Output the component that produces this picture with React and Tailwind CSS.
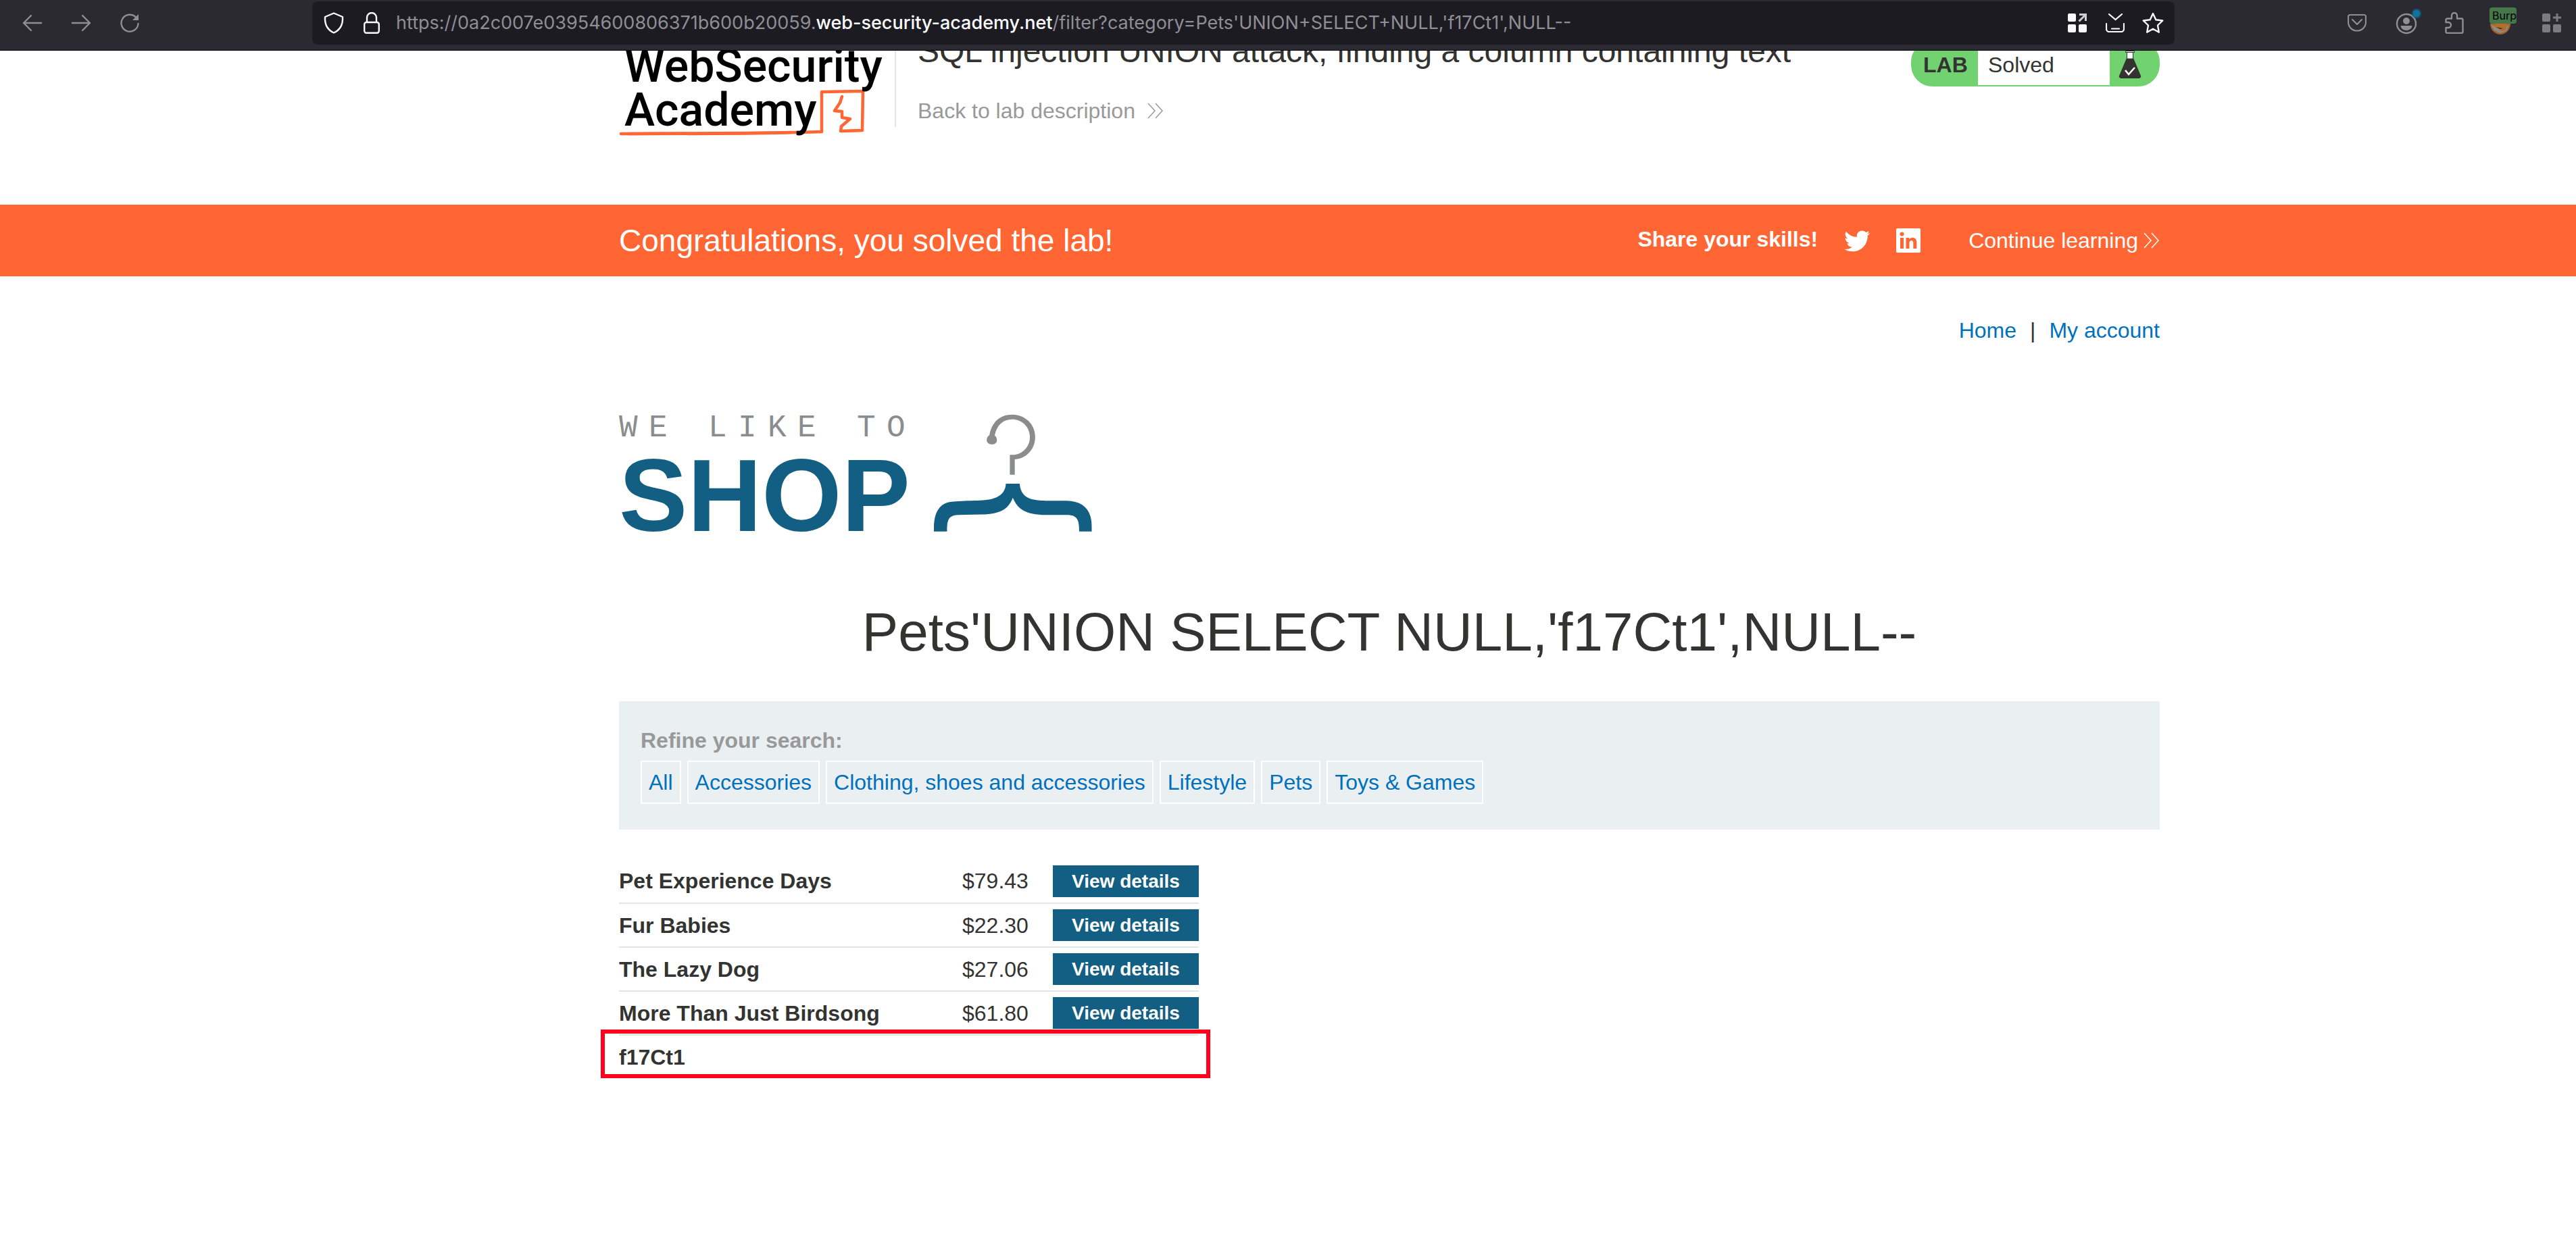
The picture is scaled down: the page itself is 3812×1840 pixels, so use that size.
import React from "react";

const COLS = "grid grid-cols-[916fr_2280fr_616fr]";

const CHROME_BTN = "flex h-10 w-10 items-center justify-center";

function Chevrons({ className }) {
  return (
    <svg className={className} viewBox="0 0 24 24" fill="none" stroke="currentColor" strokeWidth="1.5" aria-hidden="true">
      <path d="M1 1l10 11L1 23M12 1l10 11-10 11" />
    </svg>
  );
}

function Arrow({ flip }) {
  return (
    <svg className="h-8 w-8" viewBox="0 0 32 32" fill="none" stroke="#8f8e97" strokeWidth="2.4" strokeLinecap="round" strokeLinejoin="round" aria-hidden="true">
      {flip ? <path d="M3 16h26M18 5l11 11-11 11" /> : <path d="M29 16H3M14 5L3 16l11 11" />}
    </svg>
  );
}

function Toolbar() {
  return (
    <header className="flex h-[75px] items-start border-b border-black bg-[#2b2a33] pt-0.5 font-['Inter',sans-serif] text-[#8f8e97]">
      <div className="flex h-16 w-[462px] shrink-0 items-center gap-8 pl-7">
        <button className={CHROME_BTN} aria-label="Back"><Arrow /></button>
        <button className={CHROME_BTN} aria-label="Forward"><Arrow flip /></button>
        <button className={CHROME_BTN} aria-label="Reload">
          <svg className="h-8 w-8" viewBox="0 0 32 32" fill="none" stroke="currentColor" strokeWidth="2.4" strokeLinecap="round" aria-hidden="true">
            <path d="M28.500 17A12.500 12.500 0 1 1 25 7.500L28 10" />
            <path d="M29 3v9h-9z" fill="currentColor" stroke="none" />
          </svg>
        </button>
      </div>
      <div className="flex h-16 min-w-0 flex-1 items-center rounded-lg bg-[#1c1b22] pl-4 pr-3">
        <svg className="mr-7 h-8 w-8 shrink-0" viewBox="0 0 32 32" fill="none" stroke="#fbfbfe" strokeWidth="2.4" strokeLinejoin="round" aria-hidden="true">
          <path d="M16 1.500L29 7c.6 10-3 19-13 23.500C6 26 2.400 17 3 7z" />
        </svg>
        <svg className="mr-6 h-8 w-6 shrink-0" viewBox="0 0 24 32" fill="none" stroke="#fbfbfe" strokeWidth="2.400" aria-hidden="true">
          <rect x="1.200" y="15" width="21.600" height="15.800" rx="3" />
          <path d="M5 15V8a7 7 0 0 1 14 0v7" />
        </svg>
        <p className="flex-1 whitespace-nowrap text-[27px] leading-8">
          https://0a2c007e03954600806371b600b20059.<span className="font-medium text-[#fbfbfe]">web-security-academy.net</span>/filter?category=Pets'UNION+SELECT+NULL,'f17Ct1',NULL--
        </p>
        <div className="flex items-center gap-4 text-[#fbfbfe]">
          <button className={CHROME_BTN} aria-label="Show extensions grid">
            <svg className="h-7 w-7" viewBox="0 0 28 28" aria-hidden="true">
              <g fill="currentColor">
                <rect width="12" height="12" rx="2" />
                <rect y="16" width="12" height="12" rx="2" />
                <rect x="16" y="16" width="12" height="12" rx="2" />
              </g>
              <path d="M17 1.500h9.500V11M26 2L16.500 11.500" fill="none" stroke="#cfcfd3" strokeWidth="3" />
            </svg>
          </button>
          <button className={CHROME_BTN} aria-label="Downloads">
            <svg className="h-7 w-7" viewBox="0 0 28 28" fill="none" stroke="currentColor" strokeWidth="2.200" strokeLinecap="round" aria-hidden="true">
              <path d="M5 1l9.500 8L24 1M1 15v8a4 4 0 0 0 4 4h18a4 4 0 0 0 4-4v-8M9 22.500h11" />
            </svg>
          </button>
          <button className={CHROME_BTN} aria-label="Bookmark this page">
            <svg className="h-8 w-8" viewBox="0 0 32 32" fill="none" stroke="currentColor" strokeWidth="2.400" strokeLinejoin="round" aria-hidden="true">
              <path d="M16 2l4.300 9.200 10 1.300-7.300 7 1.800 10.200L16 24.800l-8.800 4.900L9 19.500l-7.300-7 10-1.300z" />
            </svg>
          </button>
        </div>
      </div>
      <div className="flex h-16 w-[594px] shrink-0 items-center justify-end gap-8 pr-4">
        <button className={CHROME_BTN} aria-label="Save to Pocket">
          <svg className="h-7 w-7" viewBox="0 0 28 28" fill="none" stroke="currentColor" strokeWidth="2.200" strokeLinecap="round" strokeLinejoin="round" aria-hidden="true">
            <path d="M3.500 2h21A2.500 2.500 0 0 1 27 4.500V13a13 12.500 0 0 1-26 0V4.500A2.500 2.500 0 0 1 3.500 2z" />
            <path d="M7 9l7 7 7-7" />
          </svg>
        </button>
        <button className={CHROME_BTN} aria-label="Account">
          <svg className="h-10 w-10 overflow-visible" viewBox="0 0 40 40" aria-hidden="true">
            <circle cx="21" cy="21" r="14" fill="none" stroke="currentColor" strokeWidth="2.400" />
            <circle cx="21" cy="17" r="5" fill="currentColor" />
            <path d="M12.500 24h17a8.500 7 0 0 1-17 0z" fill="currentColor" />
            <circle cx="36" cy="6" r="7.500" fill="#10739e" opacity="0.35" />
            <circle cx="36" cy="6" r="5.500" fill="#10739e" />
          </svg>
        </button>
        <button className={CHROME_BTN} aria-label="Extensions">
          <svg className="h-8 w-7" viewBox="0 0 28 32" fill="none" stroke="currentColor" strokeWidth="2.400" strokeLinejoin="round" aria-hidden="true">
            <path d="M10 9.500V5a4 4 0 0 1 8 0v4.500h6.500a2 2 0 0 1 2 2V29a2 2 0 0 1-2 2h-21a2 2 0 0 1-2-2v-6H5a4 4 0 0 0 0-8H1.500v-3.500a2 2 0 0 1 2-2z" />
          </svg>
        </button>
        <button className="flex h-12 w-10 flex-col items-start pt-px" aria-label="Burp proxy">
          <span className="flex h-6 w-10 items-center overflow-hidden rounded-sm bg-[#44774a] pl-1 text-base leading-6 text-black">Burp</span>
          <svg className="h-4 w-8" viewBox="0 0 32 16" aria-hidden="true">
            <path d="M1 0h30a15 16 0 0 1-30 0z" fill="#a7642a" />
            <path d="M2 1l6 3 9 6 12-9-4 10-9 3-9-4z" fill="#8b8b8b" />
            <path d="M8 0h18l-2 10-6 1-10-6z" fill="#b56d28" />
            <path d="M10 5l5 1 5 1-4 1z" fill="#2b2a33" />
          </svg>
        </button>
        <button className={CHROME_BTN} aria-label="Add widget">
          <svg className="h-7 w-7" viewBox="0 0 28 28" fill="#7c7b83" aria-hidden="true">
            <rect width="12" height="12" rx="2" />
            <rect y="16" width="12" height="12" rx="2" />
            <rect x="16" y="16" width="12" height="12" rx="2" />
            <path d="M20.500 0h3v4.500H28v3h-4.500V12h-3V7.500H16v-3h4.500z" />
          </svg>
        </button>
      </div>
    </header>
  );
}

function AcademyLogo() {
  return (
    <a href="#academy" className="relative block h-[188px] w-[408px] shrink-0 text-black">
      <svg className="absolute bottom-0 left-0 h-20 w-[370px]" viewBox="0 0 370 80" fill="none" stroke="#ff6633" strokeWidth="4.500" strokeLinejoin="round" strokeLinecap="round" aria-hidden="true">
        <path d="M3 74c100-1 200 0 297-3L300 12l61-1-1 58-32 1 1-7 13-11-12-2v-9l-11-1 8-12 3-9" />
        <path d="M14 74c90 0 190 0 240-2" />
      </svg>
      <span className="relative block pl-2 pt-[50px] font-['Roboto',sans-serif] text-[68px] font-medium leading-[65px]">
        WebSecurity<br />Academy
      </span>
    </a>
  );
}

function LabHeader() {
  return (
    <section className={`${COLS} h-[228px] overflow-hidden`}>
      <div className="col-start-2 -mt-[59px] flex items-start">
        <AcademyLogo />
        <div className="h-[172px] w-0.5 bg-[#e4e4e4]" />
        <div className="flex-1 pl-8 pt-[30px]">
          <h2 className="text-[48px] leading-[60px]">SQL injection UNION attack, finding a column containing text</h2>
          <a href="#lab" className="mt-[38px] flex items-center gap-[18px] text-[32px] leading-10 text-[#999999]">
            Back to lab description
            <Chevrons className="h-6 w-6" />
          </a>
        </div>
        <div className="mt-11 flex h-[68px] w-[368px] overflow-hidden rounded-[32px] border-2 border-[#72d26f] bg-[#72d26f] text-[32px] leading-[68px]">
          <span className="w-[97px] pl-4 font-bold">LAB</span>
          <span className="flex-1 bg-white pl-[15px]">Solved</span>
          <span className="flex w-[72px] items-center pl-3">
            <svg className="h-11 w-9" viewBox="0 0 36 44" aria-hidden="true">
              <path d="M13 14h10l11 26a3 3 0 0 1-3 4H5a3 3 0 0 1-3-4z" fill="#333332" />
              <path d="M13.500 5h9v10h-9z" fill="#fff" stroke="#333332" />
              <path d="M11.500 3.500h13v2h-13z" fill="#fff" stroke="#333332" />
              <path d="M11 32l5 6 9-10" fill="none" stroke="#fff" strokeWidth="2.500" />
            </svg>
          </span>
        </div>
      </div>
    </section>
  );
}

function Banner() {
  return (
    <section className={`${COLS} bg-[#ff6633] text-white`}>
      <div className="col-start-2 flex h-[106px] items-center">
        <h4 className="flex-1 text-[46px] leading-[60px]">Congratulations, you solved the lab!</h4>
        <span className="pb-1 text-[32px] font-bold leading-10">Share your skills!</span>
        <a href="#twitter" aria-label="Twitter" className="ml-9">
          <svg className="h-11 w-11" viewBox="0 0 24 24" fill="currentColor" aria-hidden="true">
            <path d="M22.460 6c-.770.350-1.600.580-2.460.690a4.300 4.300 0 0 0 1.880-2.380 8.600 8.600 0 0 1-2.720 1.040 4.280 4.280 0 0 0-7.320 2.920c0 .340.040.670.110.980A12.160 12.160 0 0 1 3.160 4.780a4.250 4.250 0 0 0 1.320 5.710 4.200 4.200 0 0 1-1.930-.530v.050a4.280 4.280 0 0 0 3.430 4.190 4.300 4.300 0 0 1-1.930.070 4.280 4.280 0 0 0 4 2.980A8.600 8.600 0 0 1 1.760 19a12.130 12.130 0 0 0 6.580 1.920c7.880 0 12.200-6.540 12.200-12.200l-.010-.560A8.700 8.700 0 0 0 22.460 6z" />
          </svg>
        </a>
        <a href="#linkedin" aria-label="LinkedIn" className="ml-9 mr-[71px]">
          <svg className="h-9 w-9" viewBox="0 0 36 36" aria-hidden="true">
            <rect width="36" height="36" rx="2" fill="#fff" />
            <g fill="#ff6633">
              <circle cx="8.500" cy="8.500" r="3" />
              <path d="M6 14h5v16H6zM14.500 14h4.800v2.300c2.500-4.300 11-3.500 11 4V30h-5v-8.500c0-5-5.800-4.500-5.800 0V30h-5z" />
            </g>
          </svg>
        </a>
        <a href="#learn" className="flex items-center gap-2 text-[32px] leading-10">
          Continue learning
          <Chevrons className="h-6 w-6" />
        </a>
      </div>
    </section>
  );
}

function ShopLogo() {
  return (
    <div className="mt-[102px] flex h-[185px] items-start">
      <div className="w-[466px]">
        <p className="whitespace-pre font-['Liberation_Mono',monospace] text-[46px] leading-[46px] text-[#8b8c8e]">
          {"WE LIKE TO".split("").map((letter, i) => (
            <span key={i} className="inline-block w-11">{letter}</span>
          ))}
        </p>
        <p className="text-[152px] font-bold leading-[152px] text-[#125f83]">SHOP</p>
      </div>
      <svg className="mt-0.5 h-[174px] w-[234px]" viewBox="1036 103 481 520" preserveAspectRatio="none" aria-hidden="true">
        <path d="M1205 196C1212 137 1238 105 1274 105C1314 105 1344 148 1344 205C1344 256 1318 300 1282 303V371H1267V283H1275C1306 283 1328 245 1328 205C1328 158 1303 126 1274 126C1248 126 1227 150 1221 197C1232 212 1230 237 1212 237C1194 237 1192 209 1205 196Z" fill="#8b8c8e" />
        <path d="M1036 622V600C1037 525 1060 492 1095 490L1136 486C1185 486 1252 490 1255 411H1297C1300 485 1345 484 1375 486H1440C1490 488 1516 525 1516 600V622H1478C1478 570 1472 549 1440 549H1365C1320 545 1292 530 1276 473C1262 530 1230 546 1180 547L1110 549C1080 551 1076 570 1076 622Z" fill="#125f83" />
      </svg>
    </div>
  );
}

const CATEGORIES = ["All", "Accessories", "Clothing, shoes and accessories", "Lifestyle", "Pets", "Toys & Games"];

const PRODUCTS = [
  ["Pet Experience Days", "$79.43"],
  ["Fur Babies", "$22.30"],
  ["The Lazy Dog", "$27.06"],
  ["More Than Just Birdsong", "$61.80"],
];

export default function App() {
  return (
    <div className="min-h-screen overflow-hidden bg-white font-['Liberation_Sans',Arial,sans-serif] text-[#333332]">
      <Toolbar />
      <LabHeader />
      <Banner />
      <main className={COLS}>
        <div className="col-start-2">
          <nav className="mt-[60px] flex justify-end gap-5 text-[32px] leading-10">
            <a href="#home" className="text-[#0071bc]">Home</a>
            <span>|</span>
            <a href="#account" className="text-[#0071bc]">My account</a>
          </nav>
          <ShopLogo />
          <h1 className="mt-[90px] text-center text-[80px] leading-[100px]">Pets'UNION SELECT NULL,'f17Ct1',NULL--</h1>
          <section className="mt-[52px] h-[190px] bg-[#eaeff1] px-8 pt-[38px] text-[32px]">
            <p className="font-bold leading-10 text-[#999999]">Refine your search:</p>
            <div className="mt-2.5 flex gap-[9px]">
              {CATEGORIES.map((name) => (
                <a key={name} href="#filter" className="border-2 border-white px-2.5 leading-[60px] text-[#0071bc]">{name}</a>
              ))}
            </div>
          </section>
          <div className="relative mt-11 w-[858px]">
            <table className="w-full border-collapse text-[32px] leading-10">
              <tbody>
                {PRODUCTS.map(([name, price]) => (
                  <tr key={name} className="h-[65px] border-b-2 border-[#e4e4e4]">
                    <th scope="row" className="text-left font-bold">{name}</th>
                    <td className="w-[134px]">{price}</td>
                    <td className="w-[216px]">
                      <a href="#product" className="block h-[47px] bg-[#125f83] text-center text-[28px] font-bold leading-[47px] text-white">View details</a>
                    </td>
                  </tr>
                ))}
                <tr className="h-16">
                  <th scope="row" colSpan={3} className="text-left font-bold">f17Ct1</th>
                </tr>
              </tbody>
            </table>
            <div className="absolute bottom-0 -left-[27px] -right-[17px] h-[72px] border-6 border-[#ff001e]" />
          </div>
        </div>
      </main>
    </div>
  );
}
